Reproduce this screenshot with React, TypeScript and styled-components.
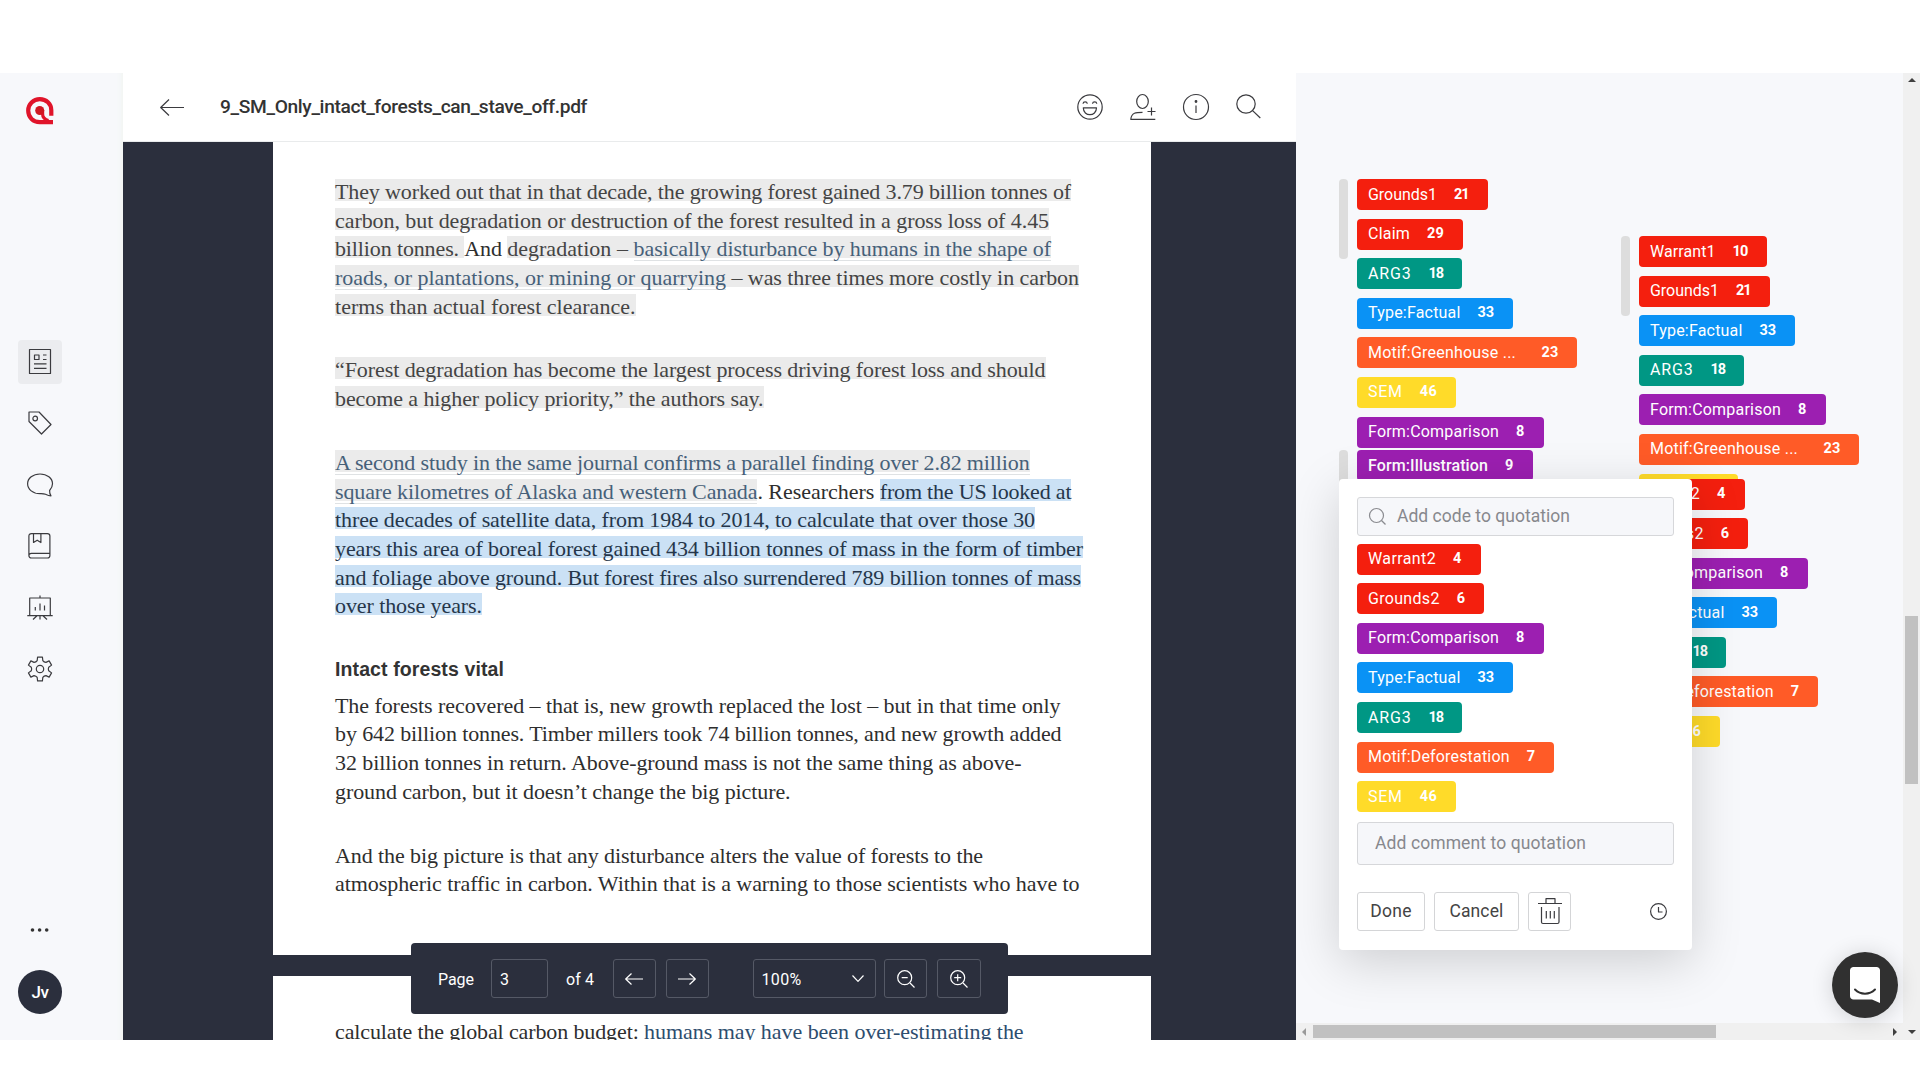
import React, { useLayoutEffect, useRef, useState } from "react";
import styled, { createGlobalStyle } from "styled-components";

const SANS = `Roboto, "Liberation Sans", sans-serif`;
const SERIF = `"Liberation Serif", serif`;
const INK = "#2b2f3d";

const GlobalStyle = createGlobalStyle`
  * { box-sizing: border-box; }
  body { margin: 0; background: #fff; font-family: ${SANS}; color: #333; overflow: hidden; }
  svg { display: block; overflow: visible; }
`;

const Run = styled.span`
  display: inline-block;
  white-space: pre;
  flex: none;
`;

/* Spaces the letters of a text run so that it fills its given width. */
function Fit({ w, children }: { w: number; children: string }) {
  const ref = useRef<HTMLSpanElement>(null);
  const [spacing, setSpacing] = useState<number | null>(null);
  useLayoutEffect(() => {
    const el = ref.current;
    if (el) setSpacing((w - el.getBoundingClientRect().width) / children.length);
  }, []);
  return (
    <Run ref={ref} style={spacing === null ? undefined : { letterSpacing: `${spacing}px` }}>
      {children}
    </Run>
  );
}

/* ---------- shell ---------- */

const Screen = styled.div`
  width: 1920px;
  height: 1080px;
  padding: 73px 0 40px;
  display: flex;
  background: #fff;
`;

const Sidebar = styled.nav`
  width: 123px;
  height: 967px;
  padding: 24px 0 26px 18px;
  display: flex;
  flex-direction: column;
  align-items: flex-start;
  background: #f7f8fb;
  box-shadow: inset -6px 0 5px -4px #f1f5f2;
`;

const LogoBox = styled.div`
  width: 44px;
  height: 28px;
  display: flex;
  justify-content: center;
  margin-bottom: 214.5px;
`;

const NavList = styled.div`
  display: flex;
  flex-direction: column;
  gap: 17.6px;
`;

const NavItem = styled.div<{ $active?: boolean }>`
  width: 44px;
  height: 44px;
  border-radius: 4px;
  display: flex;
  align-items: center;
  justify-content: center;
  background: ${(p) => (p.$active ? "#ebecef" : "transparent")};
`;

const SideFoot = styled.div`
  margin-top: auto;
  width: 44px;
  display: flex;
  flex-direction: column;
  align-items: center;
  gap: 38px;
`;

const Avatar = styled.div`
  width: 44px;
  height: 44px;
  border-radius: 50%;
  background: ${INK};
  color: #fff;
  font-size: 17px;
  font-weight: 500;
  display: flex;
  align-items: center;
  justify-content: center;
`;

const Main = styled.main`
  position: relative;
  width: 1173px;
  height: 967px;
  display: flex;
  flex-direction: column;
  background: ${INK};
`;

const Header = styled.header`
  height: 69px;
  flex: none;
  padding: 0 35.5px 0 37px;
  display: flex;
  align-items: center;
  background: #fff;
  border-bottom: 1px solid #e9ebec;
`;

const Title = styled.h1`
  margin: 0 auto 0 36px;
  font-size: 19.2px;
  font-weight: 500;
  line-height: 26px;
  color: #333;
`;

const HeaderIcons = styled.div`
  display: flex;
  align-items: center;
  gap: 27px;
  padding-bottom: 1px;
`;

/* ---------- document ---------- */

const Viewer = styled.div`
  height: 898px;
  padding-left: 150px;
  overflow: hidden;
`;

const Page = styled.article<{ $h: number; $top: number }>`
  width: 878px;
  height: ${(p) => p.$h}px;
  padding: ${(p) => p.$top}px 0 0 62px;
  margin-bottom: 21px;
  background: #fff;
  font-family: ${SERIF};
  font-size: 22px;
  color: #2e2e2e;
`;

const Para = styled.div<{ $gap: number }>`
  margin-bottom: ${(p) => p.$gap}px;
`;

const Line = styled.div`
  height: 28.67px;
  display: flex;
  align-items: flex-start;
`;

const Piece = styled.span<{ $bg?: string; $link?: boolean; $color?: string }>`
  display: block;
  height: ${(p) => (p.$link ? 25 : 22)}px;
  line-height: 26px;
  background: linear-gradient(${(p) => p.$bg || "transparent"}, ${(p) => p.$bg || "transparent"}) 0 0 / 100% 22px no-repeat;
  border-bottom: ${(p) => (p.$link ? "1px solid #dfe2e4" : "0")};
  color: ${(p) => p.$color || "inherit"};
`;

const Subhead = styled.h2`
  margin: 0;
  height: 35px;
  font-family: "Liberation Sans", sans-serif;
  font-size: 19.5px;
  font-weight: 700;
  line-height: 22px;
  color: #333;
`;

type Kind = "plain" | "coded" | "codedLink" | "selected" | "link";
const kinds: Record<Kind, { $bg?: string; $link?: boolean; $color?: string }> = {
  plain: {},
  coded: { $bg: "#ebebeb", $color: "#444" },
  codedLink: { $bg: "#ebebeb", $color: "#466079", $link: true },
  selected: { $bg: "#cbe1f5", $color: "#25364a" },
  link: { $color: "#2d4d6e", $link: true },
};
type Seg = [string, number, Kind];

function Lines({ rows, gap }: { rows: Seg[][]; gap: number }) {
  return (
    <Para $gap={gap}>
      {rows.map((row, i) => (
        <Line key={i}>
          {row.map(([text, w, kind], j) => (
            <Piece key={j} {...kinds[kind]}>
              <Fit w={w}>{text}</Fit>
            </Piece>
          ))}
        </Line>
      ))}
    </Para>
  );
}

const p1: Seg[][] = [
  [["They worked out that in that decade, the growing forest gained 3.79 billion tonnes of", 736, "coded"]],
  [["carbon, but degradation or destruction of the forest resulted in a gross loss of 4.45", 714, "coded"]],
  [
    ["billion tonnes. ", 129.3, "coded"],
    ["And ", 42.8, "plain"],
    ["degradation – ", 126.4, "coded"],
    ["basically disturbance by humans in the shape of", 417.5, "codedLink"],
  ],
  [
    ["roads, or plantations, or mining or quarrying", 391, "codedLink"],
    [" – was three times more costly in carbon", 353, "coded"],
  ],
  [["terms than actual forest clearance.", 300.5, "coded"]],
];
const p2: Seg[][] = [
  [["“Forest degradation has become the largest process driving forest loss and should", 710.5, "coded"]],
  [["become a higher policy priority,” the authors say.", 428.5, "coded"]],
];
const p3: Seg[][] = [
  [["A second study in the same journal confirms a parallel finding over 2.82 million", 694.5, "codedLink"]],
  [
    ["square kilometres of Alaska and western Canada", 422.4, "codedLink"],
    [". Researchers ", 122.4, "plain"],
    ["from the US looked at", 191.5, "selected"],
  ],
  [["three decades of satellite data, from 1984 to 2014, to calculate that over those 30", 700, "selected"]],
  [["years this area of boreal forest gained 434 billion tonnes of mass in the form of timber", 748, "selected"]],
  [["and foliage above ground. But forest fires also surrendered 789 billion tonnes of mass", 746, "selected"]],
  [["over those years.", 147, "selected"]],
];
const p4: Seg[][] = [
  [["The forests recovered – that is, new growth replaced the lost – but in that time only", 725.5, "plain"]],
  [["by 642 billion tonnes. Timber millers took 74 billion tonnes, and new growth added", 726.5, "plain"]],
  [["32 billion tonnes in return. Above-ground mass is not the same thing as above-", 686.5, "plain"]],
  [["ground carbon, but it doesn’t change the big picture.", 455.5, "plain"]],
];
const p5: Seg[][] = [
  [["And the big picture is that any disturbance alters the value of forests to the", 648, "plain"]],
  [["atmospheric traffic in carbon. Within that is a warning to those scientists who have to", 744.5, "plain"]],
];
const p6: Seg[][] = [
  [
    ["calculate the global carbon budget: ", 309, "plain"],
    ["humans may have been over-estimating the", 379.6, "link"],
  ],
];

/* ---------- page toolbar ---------- */

const Toolbar = styled.div`
  position: absolute;
  left: 288px;
  top: 870px;
  width: 597px;
  height: 71px;
  padding: 0 27px;
  display: flex;
  align-items: center;
  border-radius: 4px;
  background: ${INK};
  color: #fff;
  font-size: 16px;
`;

const ToolBox = styled.div<{ $w: number; $ml: number; $text?: boolean }>`
  width: ${(p) => p.$w}px;
  height: 39px;
  margin-left: ${(p) => p.$ml}px;
  padding: 0 ${(p) => (p.$text ? 8 : 0)}px;
  flex: none;
  display: flex;
  align-items: center;
  justify-content: ${(p) => (p.$text ? "space-between" : "center")};
  border: 1px solid #555966;
  border-radius: 3px;
`;

const ToolText = styled.span<{ $ml?: number }>`
  margin-left: ${(p) => p.$ml || 0}px;
  padding-top: 1px;
`;

/* ---------- code margin ---------- */

const Margin = styled.aside`
  position: relative;
  width: 624px;
  height: 967px;
  background: #f7f8fb;
  overflow: hidden;
`;

const Group = styled.div<{ $x: number; $y: number }>`
  position: absolute;
  left: ${(p) => p.$x}px;
  top: ${(p) => p.$y}px;
  display: flex;
  align-items: flex-start;
  gap: 9px;
`;

const Bar = styled.div<{ $h: number }>`
  width: 9px;
  height: ${(p) => p.$h}px;
  border-radius: 4px;
  background: #dddddd;
`;

const TagList = styled.div`
  display: flex;
  flex-direction: column;
  align-items: flex-start;
  gap: 8.6px;
`;

const TagBox = styled.div<{ $bg: string }>`
  height: 31px;
  padding: 0 19px 0 11px;
  display: flex;
  align-items: center;
  gap: 17px;
  border-radius: 4px;
  background: ${(p) => p.$bg};
  color: #fff;
  font-size: 16px;
  line-height: 30px;
`;

const TagLabel = styled.span<{ $w: number; $strong?: boolean }>`
  width: ${(p) => p.$w}px;
  font-weight: ${(p) => (p.$strong ? 500 : 400)};
  white-space: nowrap;
`;

const Count = styled.b`
  font-size: 14.5px;
  font-weight: 700;
`;

const RED = "#f41f0e";
const GREEN = "#009784";
const BLUE = "#0a92f5";
const ORANGE = "#ff5b27";
const YELLOW = "#ffdb29";
const PURPLE = "#9c1fb1";

type TagDef = { t: string; n: string; c: string; w: number; nw: number; box?: number; strong?: boolean };
const T: Record<string, TagDef> = {
  grounds1: { t: "Grounds1", n: "21", c: RED, w: 69, nw: 14.5 },
  claim: { t: "Claim", n: "29", c: RED, w: 42, nw: 17 },
  arg3: { t: "ARG3", n: "18", c: GREEN, w: 43.6, nw: 14.5 },
  factual: { t: "Type:Factual", n: "33", c: BLUE, w: 92.6, nw: 16.5 },
  green: { t: "Motif:Greenhouse ...", n: "23", c: ORANGE, w: 148, nw: 17, box: 156.4 },
  sem: { t: "SEM", n: "46", c: YELLOW, w: 34.8, nw: 17.5 },
  comp: { t: "Form:Comparison", n: "8", c: PURPLE, w: 131, nw: 8.5 },
  illus: { t: "Form:Illustration", n: "9", c: PURPLE, w: 120, nw: 8.5, strong: true },
  warrant1: { t: "Warrant1", n: "10", c: RED, w: 65.5, nw: 15 },
  warrant2: { t: "Warrant2", n: "4", c: RED, w: 68, nw: 8.5 },
  grounds2: { t: "Grounds2", n: "6", c: RED, w: 71.7, nw: 8.5 },
  defor: { t: "Motif:Deforestation", n: "7", c: ORANGE, w: 141.7, nw: 8 },
};

function Tags({ ids }: { ids: string[] }) {
  return (
    <TagList>
      {ids.map((id) => {
        const d = T[id];
        return (
          <TagBox key={id} $bg={d.c}>
            <TagLabel $w={d.box || d.w} $strong={d.strong}>
              <Fit w={d.w}>{d.t}</Fit>
            </TagLabel>
            <Count>
              <Fit w={d.nw}>{d.n}</Fit>
            </Count>
          </TagBox>
        );
      })}
    </TagList>
  );
}

const quoted = ["warrant2", "grounds2", "comp", "factual", "arg3", "defor", "sem"];

/* ---------- quotation popup ---------- */

const Popup = styled.section`
  position: absolute;
  left: 43px;
  top: 405.5px;
  width: 353px;
  height: 471px;
  padding: 18px 18px 0;
  border-radius: 4px;
  background: #fff;
  box-shadow: 0 12px 50px rgba(0, 0, 0, 0.17);
`;

const Field = styled.div<{ $h: number; $pl: number }>`
  height: ${(p) => p.$h}px;
  padding-left: ${(p) => p.$pl}px;
  display: flex;
  align-items: center;
  gap: 11px;
  border: 1px solid #d6d7da;
  border-radius: 3px;
  background: #f6f7fa;
  color: #87888d;
  font-size: 17.5px;
`;

const PopupTags = styled.div`
  padding: 8.2px 0 9.5px;
`;

const Actions = styled.div`
  margin-top: 27px;
  display: flex;
  align-items: center;
`;

const Button = styled.div<{ $w: number }>`
  width: ${(p) => p.$w}px;
  height: 39px;
  margin-right: 9.3px;
  display: flex;
  align-items: center;
  justify-content: center;
  border: 1px solid #d4d5d7;
  border-radius: 3px;
  font-size: 17.5px;
  font-weight: 400;
  color: #444;
`;

const ClockSlot = styled.div`
  margin: 0 7px 0 auto;
`;

/* ---------- scrollbars and chat ---------- */

const VTrack = styled.div`
  position: absolute;
  right: 0;
  top: 0;
  width: 17px;
  height: 967px;
  padding: 5px 2px 6px;
  display: flex;
  flex-direction: column;
  align-items: center;
  background: #f0f0f0;
`;

const VThumb = styled.div`
  width: 13px;
  height: 168px;
  margin: 534px 0 auto;
  background: #c1c1c1;
`;

const HTrack = styled.div`
  position: absolute;
  left: 0;
  bottom: 0;
  width: 607px;
  height: 17px;
  padding: 0 6px;
  display: flex;
  align-items: center;
  background: #f0f0f0;
`;

const HThumb = styled.div`
  width: 403px;
  height: 13px;
  margin: 0 auto 0 7px;
  background: #c1c1c1;
`;

const Chat = styled.div`
  position: absolute;
  left: 536px;
  top: 879px;
  width: 66px;
  height: 66px;
  border-radius: 50%;
  display: flex;
  align-items: center;
  justify-content: center;
  background: #303030;
  box-shadow: 0 2px 22px rgba(0, 0, 0, 0.16);
`;

/* ---------- icons ---------- */

function Icon({ w, h = w, sw = 1.2, color = "#3b3b3f", children }: any) {
  return (
    <svg width={w} height={h} viewBox={`0 0 ${w} ${h}`} fill="none" stroke={color} strokeWidth={sw} strokeLinejoin="round">
      {children}
    </svg>
  );
}

const Arrow = ({ w, h, color, flip, sw }: any) => (
  <Icon w={w} h={h} color={color} sw={sw}>
    <path
      transform={flip ? `translate(${w} 0) scale(-1 1)` : undefined}
      d={`M${w} ${h / 2}H.7M${h / 2 + 0.5} .5L.7 ${h / 2}L${h / 2 + 0.5} ${h - 0.5}`}
    />
  </Icon>
);

const gear = (() => {
  const pts: string[] = [];
  for (let i = 0; i < 6; i++) {
    const a = (i * Math.PI) / 3 - Math.PI / 2;
    const p = (r: number, d: number) => `${(13 + r * Math.cos(a + d)).toFixed(2)} ${(13 + r * Math.sin(a + d)).toFixed(2)}`;
    pts.push(`${i ? "L" : "M"}${p(8.9, -0.32)}L${p(12.2, -0.2)}L${p(12.2, 0.2)}L${p(8.9, 0.32)}Q${p(7.9, 0.52)} ${p(8.9, 0.727)}`);
  }
  return pts.join("") + "Z";
})();

export default function App() {
  return (
    <Screen>
      <GlobalStyle />
      <Sidebar>
        <LogoBox>
          <svg width="28" height="28" viewBox="0 0 28 28" fill="none" stroke="#e0142a">
            <path d="M25.300 18.800V13.200C25.300 6.800 20.300 2.200 13.800 2.200C7.300 2.200 2.200 7.200 2.200 13.500C2.200 20.500 7.300 25.200 13.800 25.200H27" strokeWidth="4.200" />
            <path d="M16.600 13V17C16.600 20.800 18.500 22.500 22.500 23.500" strokeWidth="3.200" />
            <circle cx="13.700" cy="13.500" r="4.500" fill="#cf1822" stroke="none" />
          </svg>
        </LogoBox>
        <NavList>
          <NavItem $active>
            <Icon w={22} h={25}>
              <path d="M.5 .5H21.500V24.500H.5ZM5.500 6H10V10.500H5.500ZM14 6H17.500M14 10.500H17.500M5 14.800H17.500M5 19.300H17.500" />
            </Icon>
          </NavItem>
          <NavItem>
            <Icon w={24} h={24}>
              <path d="M1 1H11L23 13.500L13.500 23L1 10.500Z" />
              <circle cx="7.200" cy="7.500" r="2.300" />
            </Icon>
          </NavItem>
          <NavItem>
            <Icon w={26} h={24}>
              <path d="M13 1C6 1 .6 5.200 .6 10.800S6 20.700 13 20.700C15 20.700 17 20.600 18.500 21.200C20.500 22.200 22 22.800 24 22.800C23 21.500 22.500 20 22.600 17.500C24.500 15.500 25.500 13.500 25.500 10.800C25.500 5.200 20 1 13 1Z" />
            </Icon>
          </NavItem>
          <NavItem>
            <Icon w={24} h={26}>
              <path d="M.9 22.500V3C.9 1.500 1.900 .7 3.400 .7H19.400C20.900 .7 21.900 1.500 21.900 3V22.500C21.900 24 20.900 25 19.400 25H3.400C1.900 25 .9 24 .9 22.500C.9 21 1.900 20.300 3.400 20.300H21.900M5.500 .7V9.500L9.200 7.200L12.900 9.500V.7" />
            </Icon>
          </NavItem>
          <NavItem>
            <Icon w={26} h={26}>
              <path d="M2.700 20V3H23.300V20M.3 20.700H25.700M13 3V.5M13 20.700V24.500M10 20.700L6 24.500M16 20.700L20 24.500M8.300 15.500V12M13 15.500V8.500M17.500 15.500V10.500" />
            </Icon>
          </NavItem>
          <NavItem>
            <Icon w={26} h={26}>
              <path d={gear} />
              <circle cx="13" cy="13" r="3.700" />
            </Icon>
          </NavItem>
        </NavList>
        <SideFoot>
          <svg width="20" height="4" viewBox="0 0 20 4" fill="#333">
            <circle cx="2.500" cy="2" r="1.800" />
            <circle cx="9.600" cy="2" r="1.800" />
            <circle cx="16.700" cy="2" r="1.800" />
          </svg>
          <Avatar>
            <Fit w={17}>Jv</Fit>
          </Avatar>
        </SideFoot>
      </Sidebar>

      <Main>
        <Header>
          <Arrow w={24} h={17} />
          <Title>
            <Fit w={367}>9_SM_Only_intact_forests_can_stave_off.pdf</Fit>
          </Title>
          <HeaderIcons>
            <Icon w={26}>
              <circle cx="13" cy="13" r="12.200" />
              <path d="M6 9.800C6.300 7.200 10 7.200 10.300 9.800M15.500 9.800C15.800 7.200 19.500 7.200 19.800 9.800M6.300 13.800H19.500C19.500 23 6.300 23 6.300 13.800Z" />
            </Icon>
            <Icon w={26}>
              <ellipse cx="12.500" cy="7.500" rx="5.800" ry="7" />
              <path d="M12.500 18.300C6 18.300 1.500 18.500 .8 25.300H25.300M21.500 13.500V21.500M17.500 17.500H25.500" />
            </Icon>
            <Icon w={26}>
              <circle cx="13" cy="13" r="12.500" />
              <path d="M13 11.500V19" />
              <circle cx="13" cy="7.500" r=".8" fill="#3b3b3f" />
            </Icon>
            <Icon w={25}>
              <circle cx="10" cy="10" r="9.200" />
              <path d="M16.600 16.600L24.300 24" />
            </Icon>
          </HeaderIcons>
        </Header>
        <Viewer>
          <Page $h={813} $top={37}>
            <Lines rows={p1} gap={35} />
            <Lines rows={p2} gap={35.3} />
            <Lines rows={p3} gap={36} />
            <Subhead>
              <Fit w={169}>Intact forests vital</Fit>
            </Subhead>
            <Lines rows={p4} gap={35.2} />
            <Lines rows={p5} gap={0} />
          </Page>
          <Page $h={100} $top={42.5}>
            <Lines rows={p6} gap={0} />
          </Page>
        </Viewer>
        <Toolbar>
          <ToolText>
            <Fit w={36}>Page</Fit>
          </ToolText>
          <ToolBox $w={57} $ml={17} $text>
            <ToolText>3</ToolText>
          </ToolBox>
          <ToolText $ml={18}>
            <Fit w={28}>of 4</Fit>
          </ToolText>
          <ToolBox $w={43} $ml={18.5}>
            <Arrow w={18} h={12} color="#fff" />
          </ToolBox>
          <ToolBox $w={43} $ml={10}>
            <Arrow w={18} h={12} color="#fff" flip />
          </ToolBox>
          <ToolBox $w={123} $ml={44} $text>
            <ToolText>
              <Fit w={40}>100%</Fit>
            </ToolText>
            <Icon w={15} h={7} color="#fff">
              <path d="M.5 .5L6 6.300L11.500 .5" />
            </Icon>
          </ToolBox>
          <ToolBox $w={43} $ml={8.5}>
            <Icon w={18} color="#fff">
              <circle cx="7.700" cy="7.700" r="7" />
              <path d="M4.700 7.700H10.700M13 13L17.500 17.500" />
            </Icon>
          </ToolBox>
          <ToolBox $w={44} $ml={9.5}>
            <Icon w={18} color="#fff">
              <circle cx="7.700" cy="7.700" r="7" />
              <path d="M4.200 7.700H11.200M7.700 4.200V11.200M13 13L17.500 17.500" />
            </Icon>
          </ToolBox>
        </Toolbar>
      </Main>

      <Margin>
        <Group $x={43} $y={106}>
          <Bar $h={80} />
          <Tags ids={["grounds1", "claim", "arg3", "factual", "green", "sem", "comp"]} />
        </Group>
        <Group $x={43} $y={377}>
          <Bar $h={80} />
          <Tags ids={["illus"]} />
        </Group>
        <Group $x={325} $y={163}>
          <Bar $h={80} />
          <Tags ids={["warrant1", "grounds1", "factual", "arg3", "comp", "green", "sem"]} />
        </Group>
        <Group $x={307} $y={405.5}>
          <Bar $h={80} />
          <Tags ids={quoted} />
        </Group>
        <Popup>
          <Field $h={39} $pl={11}>
            <Icon w={17} color="#8a8b90">
              <circle cx="7.500" cy="7.500" r="7" />
              <path d="M12.500 12.500L16.500 16.500" />
            </Icon>
            <Fit w={173}>Add code to quotation</Fit>
          </Field>
          <PopupTags>
            <Tags ids={quoted} />
          </PopupTags>
          <Field $h={43} $pl={17}>
            <Fit w={211}>Add comment to quotation</Fit>
          </Field>
          <Actions>
            <Button $w={68}>
              <Fit w={41.5}>Done</Fit>
            </Button>
            <Button $w={84.3}>
              <Fit w={54}>Cancel</Fit>
            </Button>
            <Button $w={43.6}>
              <Icon w={24} h={26}>
                <path d="M0 5.500H24M8 5.500V.7H17V5.500M3.500 9V24C3.500 25 4 25.500 5 25.500H19.500C20.500 25.500 21 25 21 24V9M8.300 13V20.500M12.300 13V20.500M16.300 13V20.500" />
              </Icon>
            </Button>
            <ClockSlot>
              <Icon w={17}>
                <circle cx="8.500" cy="8.500" r="7.900" />
                <path d="M8.500 4V9H12.500" />
              </Icon>
            </ClockSlot>
          </Actions>
        </Popup>
        <HTrack>
          <svg width="4" height="8" fill="#9a9a9a"><path d="M4 0V8L0 4Z" /></svg>
          <HThumb />
          <svg width="4" height="8" fill="#404040"><path d="M0 0V8L4 4Z" /></svg>
        </HTrack>
        <VTrack>
          <svg width="8" height="4" fill="#404040"><path d="M0 4H8L4 0Z" /></svg>
          <VThumb />
          <svg width="8" height="4" fill="#404040"><path d="M0 0H8L4 4Z" /></svg>
        </VTrack>
        <Chat>
          <svg width="30" height="36" viewBox="0 0 30 36">
            <path d="M3.500 0H26.500C28.500 0 30 1.500 30 3.500V36L22 32.500H3.500C1.500 32.500 0 31 0 29V3.500C0 1.500 1.500 0 3.500 0Z" fill="#fff" />
            <path d="M5 22.500C10.500 28 19.500 28 25 22.500" fill="none" stroke="#303030" strokeWidth="2" strokeLinecap="round" />
          </svg>
        </Chat>
      </Margin>
    </Screen>
  );
}
